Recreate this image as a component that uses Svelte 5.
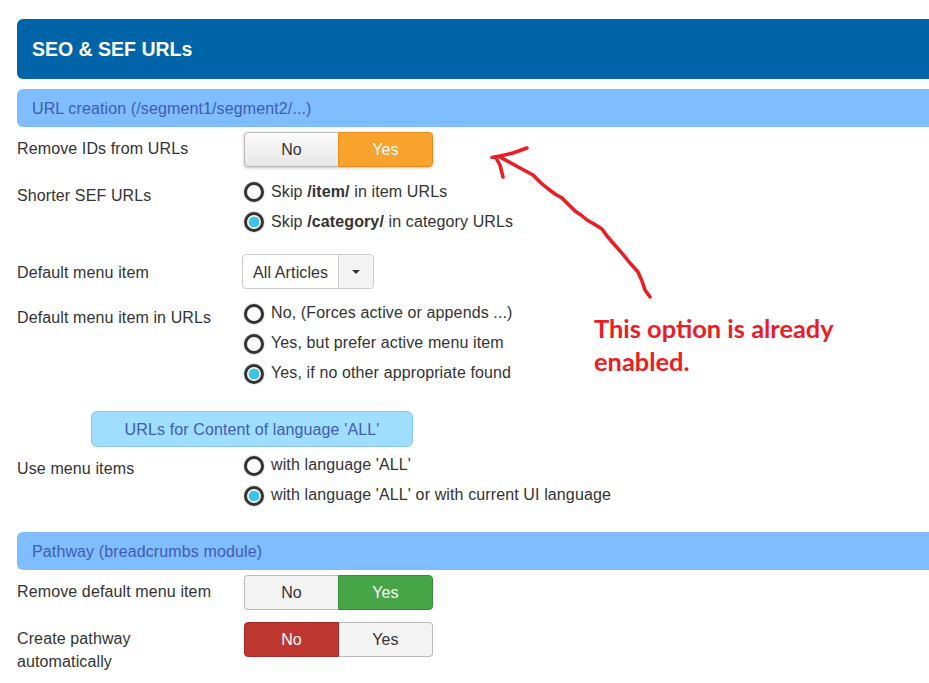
<script lang="ts">
	const menuOptions = [
		{ text: 'No, (Forces active or appends ...)', checked: false },
		{ text: 'Yes, but prefer active menu item', checked: false },
		{ text: 'Yes, if no other appropriate found', checked: true }
	];
	const langOptions = [
		{ text: "with language 'ALL'", checked: false },
		{ text: "with language 'ALL' or with current UI language", checked: true }
	];
</script>

<div class="page">
	<h1 class="title">SEO &amp; SEF URLs</h1>

	<div class="section">URL creation (/segment1/segment2/...)</div>

	<div class="row r-ids">
		<span class="label">Remove IDs from URLs</span>
		<div class="toggle raised">
			<span class="opt plain">No</span>
			<span class="opt orange">Yes</span>
		</div>
	</div>

	<div class="row r-shorter">
		<span class="label">Shorter SEF URLs</span>
		<div class="radios">
			<label class="radio"><input type="radio" name="sef1" />
				<span>Skip <b>/item/</b> in item URLs</span></label>
			<label class="radio"><input type="radio" name="sef2" checked />
				<span>Skip <b>/category/</b> in category URLs</span></label>
		</div>
	</div>

	<div class="row r-default">
		<span class="label">Default menu item</span>
		<div class="select">
			<span class="value">All Articles</span>
			<span class="caret-box"><i class="caret"></i></span>
		</div>
	</div>

	<div class="row r-menu">
		<span class="label">Default menu item in URLs</span>
		<div class="radios lifted">
			{#each menuOptions as o, i}
				<label class="radio"><input type="radio" name={'menu' + i} checked={o.checked} /><span>{o.text}</span></label>
			{/each}
		</div>
	</div>

	<div class="subsection">URLs for Content of language 'ALL'</div>

	<div class="row r-use">
		<span class="label">Use menu items</span>
		<div class="radios lifted">
			{#each langOptions as o, i}
				<label class="radio"><input type="radio" name={'lang' + i} checked={o.checked} /><span>{o.text}</span></label>
			{/each}
		</div>
	</div>

	<div class="section second">Pathway (breadcrumbs module)</div>

	<div class="row r-remove">
		<span class="label">Remove default menu item</span>
		<div class="toggle">
			<span class="opt flat">No</span>
			<span class="opt green">Yes</span>
		</div>
	</div>

	<div class="row r-create">
		<span class="label">Create pathway<br />automatically</span>
		<div class="toggle">
			<span class="opt red">No</span>
			<span class="opt flat">Yes</span>
		</div>
	</div>

	<!-- hand drawn note on top of the form -->
	<svg class="arrow" width="929" height="683" viewBox="0 0 929 683" aria-hidden="true">
		<path d="M527 148 L513 153 L500 156 L492 157.5" />
		<path d="M496 158 L500 165 L503 177" />
		<path d="M500 157 L511 163 L520 168 L533 175 L540 182 L547 188 L555 194 L562 198 L569 205 L575 211 L581 215 L587 220 L594 224 L602 229 L607 236 L613 243 L621 252 L630 263 L638 272 L642 281 L645 290 L650 297" />
	</svg>
	<p class="note">This option is already<br />enabled.</p>
</div>

<style>
	:global(body) {
		background: #fff;
		overflow: hidden;
	}
	.page {
		position: relative;
		height: 683px;
		overflow: hidden;
		padding: 19px 0 0 17px;
		box-sizing: border-box;
		font-family: 'Liberation Sans', Arial, sans-serif;
		font-size: 16px;
		letter-spacing: 0.12px;
		color: #333;
	}
	.title {
		margin: 0;
		height: 60px;
		line-height: 60px;
		padding-left: 15px;
		background: #0065a8;
		color: #fff;
		font-size: 19.5px;
		letter-spacing: 0;
		font-weight: 700;
		border-radius: 6px 0 0 6px;
	}
	.section {
		margin-top: 10px;
		height: 38px;
		line-height: 40px;
		padding-left: 15px;
		background: #7fbdff;
		color: #3f5cb0;
		border-radius: 6px 0 0 6px;
	}
	.section.second {
		margin-top: 21px;
	}
	.subsection {
		margin: 22px 0 0 74px;
		width: 320px;
		height: 34px;
		line-height: 36px;
		text-align: center;
		background: #a0deff;
		color: #3f5cb0;
		border: 1px solid #8cc8f0;
		border-radius: 6px;
	}
	.row {
		display: grid;
		grid-template-columns: 226px 1fr;
		align-items: start;
	}
	.label {
		line-height: 23px;
	}
	.r-ids {
		margin-top: 5px;
	}
	.r-ids .label {
		margin-top: 5px;
	}
	.r-shorter {
		margin-top: 10px;
	}
	.r-shorter .label {
		margin-top: 7px;
	}
	.r-default {
		margin-top: 17px;
	}
	.r-default .label {
		margin-top: 7px;
	}
	.r-menu {
		margin-top: 10px;
	}
	.r-menu .label {
		margin-top: 7px;
	}
	.r-use {
		margin-top: 4px;
	}
	.r-use .label {
		margin-top: 6px;
	}
	.r-remove {
		margin-top: 5px;
	}
	.r-remove .label {
		margin-top: 5px;
	}
	.r-create {
		margin-top: 12px;
	}
	.r-create .label {
		margin-top: 5px;
	}
	.toggle {
		display: flex;
		width: 189px;
		height: 35px;
		margin-left: 1px;
		border-radius: 4px;
	}
	.toggle.raised {
		box-shadow: 0 1px 3px rgba(0, 0, 0, 0.25);
	}
	.opt {
		flex: 1;
		box-sizing: border-box;
		line-height: 33px;
		text-align: center;
		border: 1px solid #bbb;
	}
	.opt:first-child {
		border-radius: 4px 0 0 4px;
	}
	.opt:last-child {
		border-radius: 0 4px 4px 0;
	}
	.plain {
		background: linear-gradient(#fbfbfb, #e6e6e6);
		border-right: 0;
	}
	.flat {
		background: #f3f3f3;
	}
	.flat:first-child {
		border-right: 0;
	}
	.flat:last-child {
		border-left: 0;
	}
	.orange {
		background: #f9a32e;
		border-color: #e08e1c;
		color: #fff;
	}
	.green {
		background: #46a546;
		border-color: #388a38;
		color: #fff;
	}
	.red {
		background: #bd362f;
		border-color: #a52d27;
		color: #fff;
	}
	.radios {
		display: flex;
		flex-direction: column;
	}
	.radio {
		display: flex;
		align-items: center;
		height: 30px;
		gap: 7px;
	}
	.radios.lifted .radio span {
		position: relative;
		top: -1px;
	}
	.radio input {
		appearance: none;
		margin: 0 0 0 1px;
		width: 20px;
		height: 20px;
		box-sizing: border-box;
		border: 3px solid #333;
		border-radius: 50%;
		background: #fff;
		box-shadow: 0 0 2px rgba(0, 0, 0, 0.35);
	}
	.radio input:checked {
		background: radial-gradient(circle, #3cc4e8 0, #3cc4e8 5px, #fff 5.8px);
	}
	.select {
		display: flex;
		width: 132px;
		height: 35px;
		margin-left: -1px;
		box-sizing: border-box;
		border: 1px solid #ccc;
		border-radius: 4px;
		overflow: hidden;
	}
	.value {
		flex: 1;
		padding-left: 10px;
		line-height: 35px;
	}
	.caret-box {
		width: 34px;
		display: flex;
		align-items: center;
		justify-content: center;
		background: #f3f3f3;
		border-left: 1px solid #ccc;
	}
	.caret {
		width: 0;
		height: 0;
		border-left: 4.5px solid transparent;
		border-right: 4.5px solid transparent;
		border-top: 4.5px solid #333;
	}
	.arrow {
		position: absolute;
		left: 0;
		top: 0;
		pointer-events: none;
	}
	.arrow path {
		fill: none;
		stroke: #ed1c24;
		stroke-width: 3.5;
		stroke-linejoin: round;
		stroke-linecap: round;
	}
	.note {
		position: absolute;
		left: 594px;
		top: 312px;
		margin: 0;
		font-family: Lato, 'Open Sans', sans-serif;
		font-size: 25.4px;
		letter-spacing: 0;
		font-weight: 700;
		line-height: 33px;
		color: #ed1c24;
		white-space: nowrap;
	}
</style>
